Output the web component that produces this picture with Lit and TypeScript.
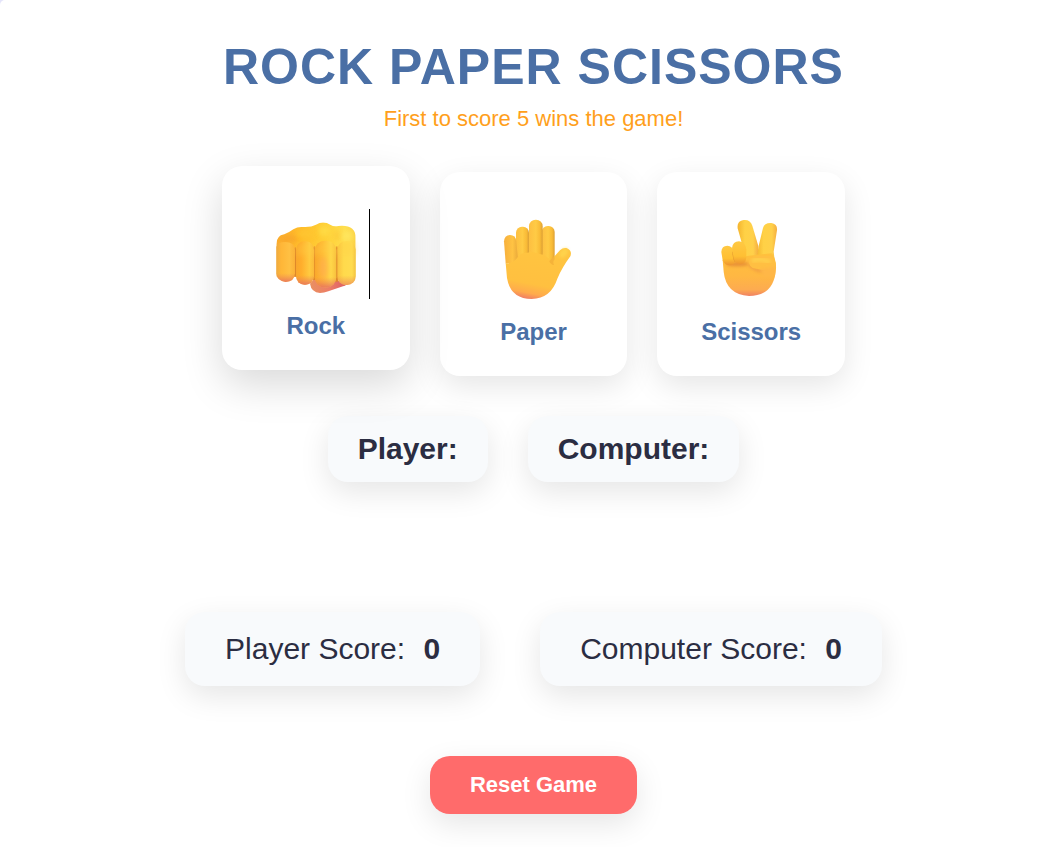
import { LitElement, html, css, svg, nothing } from "lit";
import { customElement, property, state } from "lit/decorators.js";

type Choice = "Rock" | "Paper" | "Scissors";

const rockArt = svg`
  <defs>
    <linearGradient id="r-back" x1="0" y1="0" x2="1" y2="0">
      <stop offset="0" stop-color="#fbac2f"/><stop offset=".3" stop-color="#ffbb2a"/>
      <stop offset=".6" stop-color="#ffcf35"/><stop offset=".85" stop-color="#ffdf4f"/><stop offset="1" stop-color="#fbd045"/>
    </linearGradient>
    <linearGradient id="r-f1" x1="0" y1="0" x2="1" y2="0">
      <stop offset="0" stop-color="#eeaa40"/><stop offset=".25" stop-color="#ffb637"/><stop offset=".7" stop-color="#ffc043"/><stop offset="1" stop-color="#fbb037"/>
    </linearGradient>
    <linearGradient id="r-f2" x1="0" y1="0" x2="1" y2="0">
      <stop offset="0" stop-color="#f9a62c"/><stop offset=".3" stop-color="#ffae2c"/><stop offset=".75" stop-color="#ffca40"/><stop offset="1" stop-color="#fbb93a"/>
    </linearGradient>
    <linearGradient id="r-f3" x1="0" y1="0" x2="1" y2="0">
      <stop offset="0" stop-color="#f9a72b"/><stop offset=".35" stop-color="#ffb833"/><stop offset=".75" stop-color="#ffd84a"/><stop offset="1" stop-color="#f8c03d"/>
    </linearGradient>
    <linearGradient id="r-f4" x1="0" y1="0" x2="1" y2="0">
      <stop offset="0" stop-color="#fac13e"/><stop offset=".35" stop-color="#ffda4c"/><stop offset=".8" stop-color="#ffdc50"/><stop offset="1" stop-color="#f3c341"/>
    </linearGradient>
    <linearGradient id="r-tip" x1="0" y1="0" x2="0" y2="1">
      <stop offset=".78" stop-color="#ee8358" stop-opacity="0"/><stop offset="1" stop-color="#e66f62" stop-opacity=".85"/>
    </linearGradient>
    <linearGradient id="r-thumb" x1="0" y1="0" x2="1" y2="0">
      <stop offset="0" stop-color="#ea9061"/><stop offset=".5" stop-color="#ec7d66"/><stop offset="1" stop-color="#d95964"/>
    </linearGradient>
    <filter id="r-blur" x="-60%" y="-60%" width="220%" height="220%"><feGaussianBlur stdDeviation="8"/></filter>
    <clipPath id="r-clip"><path d="M34 205V118Q34 92 58 88Q70 84 85 73Q98 65 112 66Q138 68 153 59Q175 46 197 60Q206 66 220 63Q272 58 272 98V215H34Z"/></clipPath>
  </defs>
  <g transform="translate(2 -4) scale(.33333)">
    <path d="M135 236Q139 262 165 264Q177 264 190 259L234 244Q247 240 251 230L150 218Z" fill="url(#r-thumb)"/>
    <g clip-path="url(#r-clip)">
      <rect x="30" y="45" width="246" height="175" fill="url(#r-back)"/>
      <ellipse cx="72" cy="102" rx="26" ry="11" fill="#f59f2b" opacity=".6" filter="url(#r-blur)"/>
      <ellipse cx="120" cy="86" rx="26" ry="12" fill="#ffc730" opacity=".7" filter="url(#r-blur)"/>
      <ellipse cx="178" cy="78" rx="16" ry="16" fill="#ffdc47" opacity=".9" filter="url(#r-blur)"/>
      <ellipse cx="216" cy="92" rx="7" ry="14" fill="#fbbf33" opacity=".6" filter="url(#r-blur)"/>
      <ellipse cx="248" cy="94" rx="16" ry="17" fill="#ffe862" opacity=".8" filter="url(#r-blur)"/>
    </g>
    <path d="M91 126Q86 130 86 150V212Q90 220 94 213V150Q94 130 91 126ZM148 122Q143 127 143 148V225H151V148Q151 127 148 122ZM216 122Q211 127 211 148V230H219V148Q219 127 216 122Z" fill="#df8829"/>
    <path d="M34 126Q37 111 60 111Q89 111 90 134V205Q88 231 62 231Q36 229 34 205Z" fill="url(#r-f1)"/>
    <path d="M34 126Q37 111 60 111Q89 111 90 134V205Q88 231 62 231Q36 229 34 205Z" fill="url(#r-tip)"/>
    <rect x="93" y="109" width="54" height="130" rx="25" fill="url(#r-f2)"/>
    <rect x="93" y="109" width="54" height="130" rx="25" fill="url(#r-tip)"/>
    <rect x="149" y="107" width="65" height="140" rx="30" fill="url(#r-f3)"/>
    <rect x="149" y="107" width="65" height="140" rx="30" fill="url(#r-tip)"/>
    <ellipse cx="175" cy="190" rx="12" ry="34" fill="#ffab58" opacity=".55" filter="url(#r-blur)"/>
    <rect x="217" y="109" width="55" height="131" rx="25" fill="url(#r-f4)"/>
    <rect x="217" y="109" width="55" height="131" rx="25" fill="url(#r-tip)" opacity=".7"/>
    <path d="M100 114H140L147 135V150H93V135ZM160 110H203L214 130V150H149V130ZM226 112H272V150H217V132Z" fill="#ffd044" opacity=".3" filter="url(#r-blur)"/>
  </g>`;

const paperArt = svg`
  <defs>
    <linearGradient id="p-fing" x1="0" y1="0" x2="1" y2="0">
      <stop offset="0" stop-color="#fdbf41"/><stop offset=".5" stop-color="#ffcb45"/><stop offset=".8" stop-color="#f9bb37"/><stop offset="1" stop-color="#dca034"/>
    </linearGradient>
    <linearGradient id="p-palm" x1=".65" y1="0" x2=".4" y2="1">
      <stop offset="0" stop-color="#ffc540"/><stop offset=".72" stop-color="#ffc040"/><stop offset=".9" stop-color="#ffab4c"/><stop offset="1" stop-color="#f28362"/>
    </linearGradient>
    <linearGradient id="p-little" x1="0" y1="0" x2="1" y2="0">
      <stop offset="0" stop-color="#f7b03d"/><stop offset=".6" stop-color="#ffc343"/><stop offset="1" stop-color="#e8a83a"/>
    </linearGradient>
    <filter id="p-blur" x="-50%" y="-50%" width="200%" height="200%"><feGaussianBlur stdDeviation="5"/></filter>
  </defs>
  <g transform="translate(10 -5) scale(.33333)">
    <rect x="155" y="48" width="39" height="110" rx="18" fill="url(#p-fing)"/>
    <rect x="78" y="50" width="39" height="110" rx="18" fill="url(#p-fing)"/>
    <rect x="117" y="29" width="41" height="120" rx="20" fill="url(#p-fing)"/>
    <path d="M42 94Q43 76 60 75Q77 75 79 94L85 160H47Z" fill="url(#p-little)"/>
    <path d="M47 159Q68 163 83 142Q92 127 113 128Q125 123 149 132Q168 135 182 151L210 121Q219 112 229 114Q248 121 241 139Q216 173 202 206Q183 265 125 267Q61 266 51 204Z" fill="url(#p-palm)"/>
    <ellipse cx="221" cy="129" rx="10" ry="17" transform="rotate(38 221 129)" fill="#ffd951" opacity=".7" filter="url(#p-blur)"/>
    <path d="M192 165Q181 164 178 153L193 138L194 148Q187 155 192 165Z" fill="#f0ab35" opacity=".65"/>
  </g>`;

const scissorsArt = svg`
  <defs>
    <linearGradient id="s-fing" x1="0" y1="0" x2="1" y2="0">
      <stop offset="0" stop-color="#f4b42f"/><stop offset=".35" stop-color="#ffd146"/><stop offset=".75" stop-color="#ffd04a"/><stop offset="1" stop-color="#f5ae40"/>
    </linearGradient>
    <linearGradient id="s-palm" x1="0" y1="0" x2="0" y2="1">
      <stop offset="0" stop-color="#ffc13c"/><stop offset=".55" stop-color="#ffb743"/><stop offset=".85" stop-color="#fdab50"/><stop offset="1" stop-color="#f08264"/>
    </linearGradient>
    <linearGradient id="s-curl" x1="0" y1="0" x2="0" y2="1">
      <stop offset="0" stop-color="#ffc943"/><stop offset=".65" stop-color="#ffbf33"/><stop offset="1" stop-color="#ed9330"/>
    </linearGradient>
    <filter id="s-blur" x="-50%" y="-50%" width="200%" height="200%"><feGaussianBlur stdDeviation="5"/></filter>
    <clipPath id="s-clip"><path d="M38 150L116 137L185 130Q198 145 198 172Q195 258 117 258Q48 253 41 185Z"/></clipPath>
  </defs>
  <g transform="translate(12 -5) scale(.33333)">
    <path d="M83 55Q80 33 101 30Q121 28 127 47L145 108L143 155H111Z" fill="url(#s-fing)"/>
    <path d="M159 54Q163 38 184 39Q203 42 201 61L191 125L195 160H139L145 112Z" fill="url(#s-fing)"/>
    <path d="M38 150L116 137L185 130Q198 145 198 172Q195 258 117 258Q48 253 41 185Z" fill="url(#s-palm)"/>
    <g clip-path="url(#s-clip)">
      <ellipse cx="82" cy="162" rx="34" ry="7" fill="#d97532" opacity=".6" filter="url(#s-blur)"/>
      <path d="M117 164Q133 185 172 184" fill="none" stroke="#e88a45" stroke-width="7" opacity=".7" filter="url(#s-blur)"/>
    </g>
    <path d="M34 126Q35 107 52 107Q68 108 72 127L76 151Q75 164 60 166Q44 167 38 151Z" fill="url(#s-curl)"/>
    <path d="M69 125Q69 145 76 155" fill="none" stroke="#d98a2b" stroke-width="4" opacity=".7"/>
    <path d="M66 114Q68 95 87 94Q106 96 109 118V143Q107 162 89 163Q74 161 71 145Z" fill="url(#s-curl)"/>
    <path d="M117 158Q119 138 142 137H179Q199 140 198 176Q184 186 163 181Q143 176 128 174Q119 169 117 158Z" fill="#ffbf42"/>
    <path d="M132 151Q150 145 175 154" fill="none" stroke="#ffcf4c" stroke-width="14" stroke-linecap="round" filter="url(#s-blur)"/>
    <path d="M150 176Q175 176 198 168V200H160Z" fill="#ffb747" filter="url(#s-blur)" clip-path="url(#s-clip)"/>
  </g>`;

const art = { Rock: rockArt, Paper: paperArt, Scissors: scissorsArt };
const choices: Choice[] = ["Rock", "Paper", "Scissors"];

@customElement("choice-card")
class ChoiceCard extends LitElement {
  @property() name: Choice = "Rock";
  @property({ type: Boolean }) active = false;

  static styles = css`
    :host { display: block; }
    .card {
      width: 100%;
      display: flex;
      flex-direction: column;
      align-items: center;
      padding: 43px 10px 30px;
      gap: 13px;
      border: 0;
      border-radius: 20px;
      background: #fff;
      color: #4a6fa5;
      font: bold 24px/28px "Liberation Sans", Arial, sans-serif;
      box-shadow: 0 10px 30px rgba(0, 0, 0, 0.1);
      cursor: pointer;
    }
    .card:focus { outline: none; }
    .active {
      transform: translateY(-6px);
      box-shadow: 0 15px 40px rgba(0, 0, 0, 0.15);
    }
    .hand { position: relative; display: block; height: 90px; }
    .picture { display: block; width: 106px; height: 90px; }
    .caret {
      position: absolute;
      top: 0;
      left: 100%;
      width: 1px;
      height: 100%;
      background: #000;
    }
  `;

  render() {
    return html`
      <button class="card ${this.active ? "active" : ""}" type="button">
        <span class="hand">
          <svg class="picture" viewBox="0 0 106 90" aria-hidden="true">${art[this.name]}</svg>
          ${this.active ? html`<span class="caret"></span>` : nothing}
        </span>
        <span>${this.name}</span>
      </button>
    `;
  }
}

@customElement("app-root")
class AppRoot extends LitElement {
  @state() hovered: Choice = "Rock";
  @state() player = 0;
  @state() computer = 0;
  @state() playerPick = "";
  @state() computerPick = "";
  @state() result = "";

  static styles = css`
    :host {
      display: block;
      background: #e4e4fa;
      color: #2b2d42;
      font-family: "Liberation Sans", Arial, sans-serif;
    }
    .game {
      box-sizing: border-box;
      min-height: 100vh;
      display: flex;
      flex-direction: column;
      align-items: center;
      padding: 37px 13px 33px 20px;
      border-top-left-radius: 5px;
      background: #fff;
    }
    .title {
      margin: 0 0 9px;
      color: #4a6fa5;
      font-size: 50px;
      line-height: 60px;
      letter-spacing: 1px;
      text-align: center;
    }
    .hint {
      margin: 0 0 40px;
      color: #ff9f1c;
      font-size: 22px;
      line-height: 26px;
    }
    .choices {
      width: 100%;
      max-width: 623px;
      display: grid;
      grid-template-columns: repeat(3, 1fr);
      gap: 30px;
      margin-bottom: 40px;
    }
    .picks, .scores {
      display: flex;
      flex-wrap: wrap;
      justify-content: center;
      font-size: 30px;
      line-height: 34px;
    }
    .picks { gap: 40px; font-weight: bold; }
    .scores { gap: 60px; margin-bottom: 70px; }
    .pick, .score {
      border-radius: 20px;
      background: #f8fafc;
      box-shadow: 0 10px 30px rgba(0, 0, 0, 0.1);
    }
    .pick { padding: 16px 30px; }
    .score { padding: 20px 40px; }
    .points { margin-left: 10px; }
    .result {
      height: 50px;
      margin: 40px 0;
      font-size: 30px;
      line-height: 50px;
    }
    .reset {
      padding: 16px 40px;
      border: 0;
      border-radius: 20px;
      background: #ff6b6b;
      color: #fff;
      font: bold 22px/26px "Liberation Sans", Arial, sans-serif;
      box-shadow: 0 10px 30px rgba(0, 0, 0, 0.1);
      cursor: pointer;
    }
  `;

  private play(pick: Choice) {
    if (this.player === 5 || this.computer === 5) return;
    const mine = choices.indexOf(pick);
    const theirs = Math.floor(Math.random() * 3);
    const outcome = (mine - theirs + 3) % 3;
    this.playerPick = pick;
    this.computerPick = choices[theirs];
    if (outcome === 1) this.player++;
    if (outcome === 2) this.computer++;
    this.result = ["Draw", "You win", "Computer wins"][outcome];
  }

  private reset() {
    this.player = this.computer = 0;
    this.playerPick = this.computerPick = this.result = "";
  }

  render() {
    return html`
      <main class="game">
        <h1 class="title">ROCK PAPER SCISSORS</h1>
        <p class="hint">First to score 5 wins the game!</p>
        <div class="choices">
          ${choices.map((name) => html`
            <choice-card
              .name=${name}
              .active=${this.hovered === name}
              @mouseenter=${() => (this.hovered = name)}
              @click=${() => this.play(name)}
            ></choice-card>
          `)}
        </div>
        <div class="picks">
          <div class="pick">Player: ${this.playerPick}</div>
          <div class="pick">Computer: ${this.computerPick}</div>
        </div>
        <div class="result" role="status">${this.result}</div>
        <div class="scores">
          <div class="score">Player Score: <b class="points">${this.player}</b></div>
          <div class="score">Computer Score: <b class="points">${this.computer}</b></div>
        </div>
        <button class="reset" type="button" @click=${this.reset}>Reset Game</button>
      </main>
    `;
  }
}
